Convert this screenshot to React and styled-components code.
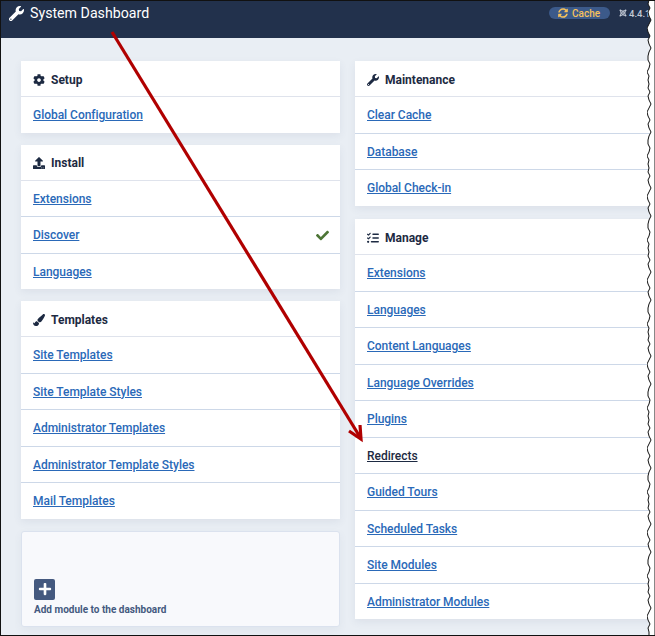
import React from "react";
import styled, { createGlobalStyle } from "styled-components";
import {
  FaCheck,
  FaCog,
  FaJoomla,
  FaPaintBrush,
  FaPlus,
  FaSyncAlt,
  FaUpload,
  FaWrench,
} from "react-icons/fa";
import { FaListCheck } from "react-icons/fa6";

const leftColumn = [
  { title: "Setup", icon: <FaCog />, links: ["Global Configuration"] },
  {
    title: "Install",
    icon: <FaUpload />,
    links: ["Extensions", "Discover", "Languages"],
  },
  {
    title: "Templates",
    icon: <FaPaintBrush />,
    links: [
      "Site Templates",
      "Site Template Styles",
      "Administrator Templates",
      "Administrator Template Styles",
      "Mail Templates",
    ],
  },
];

const rightColumn = [
  {
    title: "Maintenance",
    icon: <FaWrench />,
    links: ["Clear Cache", "Database", "Global Check-in"],
  },
  {
    title: "Manage",
    icon: <FaListCheck />,
    links: [
      "Extensions",
      "Languages",
      "Content Languages",
      "Language Overrides",
      "Plugins",
      "Redirects",
      "Guided Tours",
      "Scheduled Tasks",
      "Site Modules",
      "Administrator Modules",
    ],
  },
];

// jagged right edge of the cropped screenshot
const offsets = [2, 1, 3, 1, 2, 4, 2, 0, 1, 3, 1, 2, 4, 2, 1, 1, 3, 2, 0, 2, 1];
const tornEdge = () => {
  const points = ["8,0"];
  for (let y = 0, i = 0; y < 636; y += 4, i++) {
    points.push(`${offsets[i % offsets.length]},${y}`);
  }
  points.push("2,636", "8,636");
  return points.join(" ");
};

function Card({ title, icon, links }) {
  return (
    <Panel>
      <PanelHead>
        <HeadIcon>{icon}</HeadIcon>
        {title}
      </PanelHead>
      {links.map((link) => (
        <Row key={link}>
          <Link $active={link === "Redirects"}>{link}</Link>
          {link === "Discover" && (
            <Tick>
              <FaCheck />
            </Tick>
          )}
        </Row>
      ))}
    </Panel>
  );
}

export default function App() {
  return (
    <>
      <Global />
      <Page>
        <Header>
          <Title>
            <FaWrench />
            System Dashboard
          </Title>
          <Tools>
            <CacheBadge>
              <FaSyncAlt />
              Cache
            </CacheBadge>
            <Version>
              <FaJoomla />
              4.4.1
            </Version>
          </Tools>
        </Header>
        <Columns>
          <Column $gap={12}>
            {leftColumn.map((card) => (
              <Card key={card.title} {...card} />
            ))}
            <AddModule>
              <AddIcon>
                <FaPlus />
              </AddIcon>
              <AddLabel>Add module to the dashboard</AddLabel>
            </AddModule>
          </Column>
          <Column $gap={13.5}>
            {rightColumn.map((card) => (
              <Card key={card.title} {...card} />
            ))}
          </Column>
        </Columns>
        <Arrow viewBox="0 0 655 636">
          <path d="M112 32 L360 437" />
          <path d="M349 431 L361 439 L360 425" />
        </Arrow>
        <Torn viewBox="0 0 8 636" preserveAspectRatio="none">
          <polygon points={tornEdge()} />
        </Torn>
      </Page>
    </>
  );
}

const Global = createGlobalStyle`
  body {
    margin: 0;
    background: #fff;
    font-family: Roboto, "Liberation Sans", sans-serif;
  }
`;

const Page = styled.div`
  position: relative;
  box-sizing: border-box;
  width: 655px;
  height: 636px;
  overflow: hidden;
  background: #e9eef4;
  border-top: 1px solid #111;
  border-left: 1px solid #111;
  border-bottom: 1px solid #111;
`;

const Header = styled.header`
  display: flex;
  align-items: flex-start;
  justify-content: space-between;
  box-sizing: border-box;
  height: 37px;
  padding: 3px 2px 0 8px;
  background: #22314c;
  color: #fff;
`;

const Title = styled.div`
  display: flex;
  align-items: center;
  gap: 6px;
  font-size: 14.2px;
  line-height: 18px;
  svg {
    width: 15px;
    height: 15px;
  }
`;

const Tools = styled.div`
  display: flex;
  align-items: center;
  gap: 9px;
  padding-top: 3px;
  padding-right: 4px;
`;

const CacheBadge = styled.div`
  display: flex;
  align-items: center;
  gap: 4px;
  box-sizing: border-box;
  width: 61px;
  height: 12px;
  margin-left: -1px;
  padding: 0 9px;
  border-radius: 6px;
  background: #3c5a8a;
  color: #f5c15c;
  font-size: 10px;
  font-weight: 500;
  svg {
    width: 10px;
    height: 10px;
  }
`;

const Version = styled.div`
  display: flex;
  align-items: center;
  gap: 2px;
  width: 30px;
  white-space: nowrap;
  color: #c3cad6;
  font-size: 9.5px;
  font-weight: 500;
  svg {
    flex: none;
    width: 8px;
    height: 8px;
  }
`;

const Columns = styled.main`
  display: grid;
  grid-template-columns: 319px 320px;
  gap: 15px;
  padding: 23px 0 0 20px;
`;

const Column = styled.div`
  display: flex;
  flex-direction: column;
  gap: ${(p) => p.$gap}px;
`;

const Panel = styled.section`
  background: #fff;
  box-shadow: 0 3px 8px rgba(60, 80, 120, 0.08);
`;

const PanelHead = styled.h2`
  display: flex;
  align-items: center;
  gap: 6px;
  box-sizing: border-box;
  height: 36px;
  margin: 0;
  padding: 2px 12px 0;
  border-bottom: 1px solid #dfe3ec;
  color: #1d2a42;
  font-size: 12px;
  font-weight: 700;
`;

const HeadIcon = styled.span`
  display: flex;
  width: 12px;
  justify-content: center;
  svg {
    width: 12px;
    height: 12px;
  }
`;

const Row = styled.div`
  display: flex;
  align-items: center;
  justify-content: space-between;
  box-sizing: border-box;
  height: 36.5px;
  padding: 0.6px 11px 0 12px;
  border-bottom: 1px solid #cdd8e8;
  &:last-child {
    border-bottom: 0;
    height: 35.5px;
  }
`;

const Link = styled.a`
  color: ${(p) => (p.$active ? "#1d2a42" : "#2a69b8")};
  font-size: 12px;
  font-weight: 500;
  letter-spacing: -0.03px;
  text-decoration: underline;
`;

const Tick = styled.span`
  display: flex;
  color: #4d7536;
  svg {
    width: 13px;
    height: 13px;
  }
`;

const AddModule = styled.div`
  box-sizing: border-box;
  display: flex;
  flex-direction: column;
  justify-content: flex-end;
  height: 96px;
  padding: 0 12px 10px;
  background: #f8f9fc;
  border: 1px solid #dbe2ee;
  border-radius: 3px;
  box-shadow: 0 3px 8px rgba(60, 80, 120, 0.06);
`;

const AddIcon = styled.span`
  display: flex;
  align-items: center;
  justify-content: center;
  width: 21px;
  height: 21px;
  border-radius: 2px;
  background: #44597f;
  color: #fff;
  svg {
    width: 14px;
    height: 14px;
  }
`;

const AddLabel = styled.div`
  margin-top: 3px;
  color: #44597f;
  font-size: 10px;
  font-weight: 700;
  line-height: 13px;
`;

const Arrow = styled.svg`
  position: absolute;
  top: -1px;
  left: -1px;
  width: 655px;
  height: 636px;
  fill: none;
  stroke: #b00000;
  stroke-width: 3.2;
  pointer-events: none;
`;

const Torn = styled.svg`
  position: absolute;
  top: -1px;
  right: 0;
  width: 8px;
  height: 636px;
  fill: #fff;
  stroke: #111;
  stroke-width: 1;
`;
